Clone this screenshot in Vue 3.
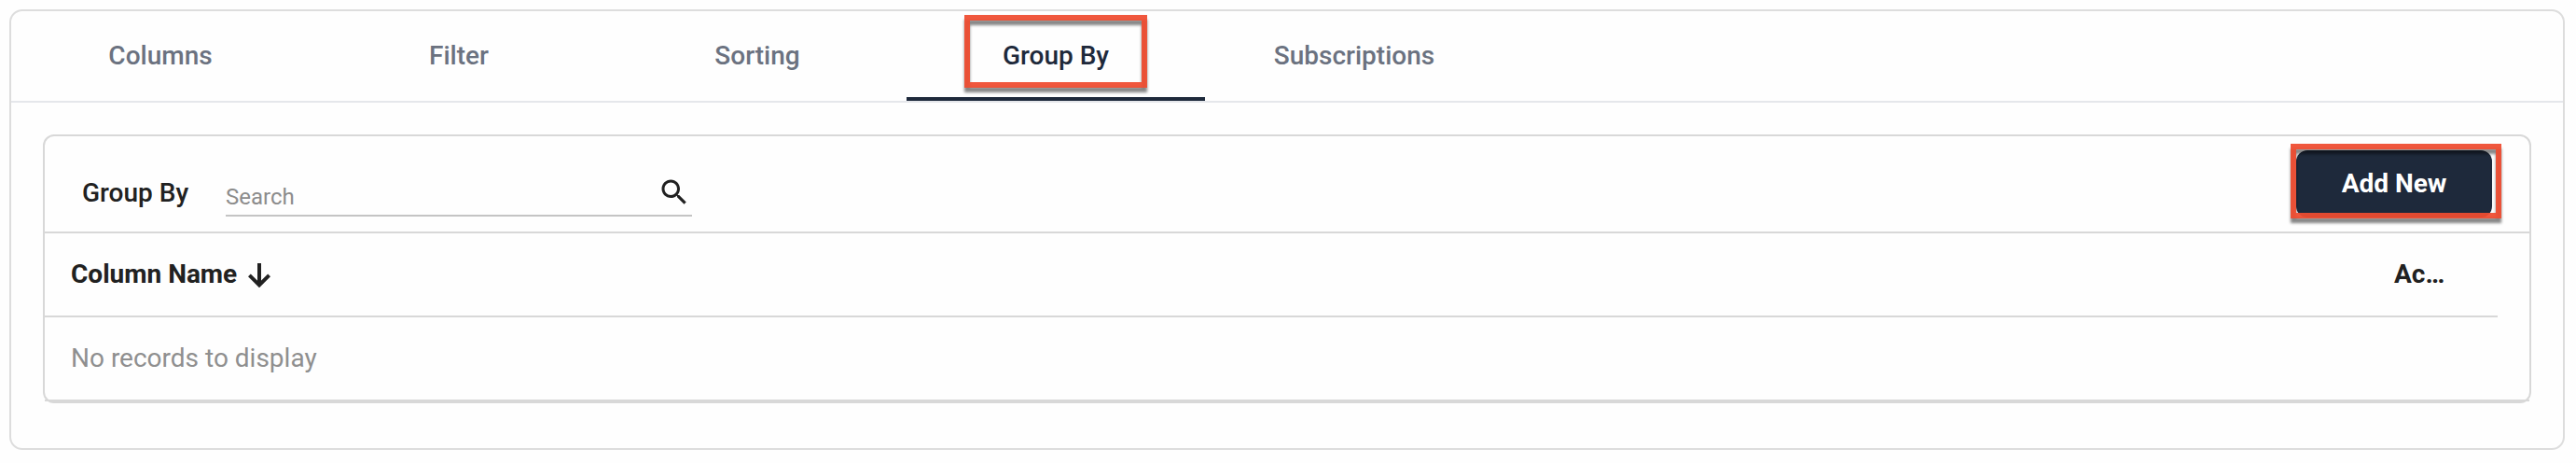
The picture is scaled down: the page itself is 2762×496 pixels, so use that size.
<template>
  <div class="grid-settings">
    <!-- Tabs -->
    <nav class="tabs">
      <button
        v-for="tab in tabs"
        :key="tab"
        class="tab"
        :class="{ active: tab === activeTab }"
        @click="activeTab = tab"
      >
        {{ tab }}
        <span v-if="tab === 'Group By'" class="highlight highlight-tab"></span>
      </button>
    </nav>

    <div class="tab-content">
      <div class="table-card">
        <!-- Toolbar -->
        <div class="toolbar">
          <h2 class="title">Group By</h2>
          <div class="search">
            <input v-model="search" type="text" placeholder="Search" />
            <svg class="icon-search" viewBox="0 0 24 24">
              <path d="M15.5 14h-.79l-.28-.27C15.41 12.59 16 11.11 16 9.5 16 5.91 13.09 3 9.5 3S3 5.91 3 9.5 5.91 16 9.5 16c1.61 0 3.09-.59 4.23-1.57l.27.28v.79l5 4.99L20.49 19l-4.99-5zm-6 0C7.01 14 5 11.99 5 9.5S7.01 5 9.5 5 14 7.01 14 9.5 11.99 14 9.5 14z" />
            </svg>
          </div>
          <div class="add">
            <button class="btn-add">Add New</button>
            <span class="highlight highlight-add"></span>
          </div>
        </div>

        <!-- Table -->
        <div class="row head">
          <div class="cell-name">
            Column Name
            <svg class="icon-sort" viewBox="0 0 24 26">
              <path d="M12 0v23M1.4 12.8L12 23.4l10.6-10.6" />
            </svg>
          </div>
          <div class="cell-action">Ac…</div>
        </div>
        <div class="row empty">No records to display</div>
      </div>
    </div>
  </div>
</template>

<script setup>
import { ref } from 'vue';

const tabs = ['Columns', 'Filter', 'Sorting', 'Group By', 'Subscriptions'];
const activeTab = ref('Group By');
const search = ref('');
</script>

<style>
body {
  display: flow-root;
  background: #fefefe;
}
</style>

<style scoped>
.grid-settings {
  box-sizing: border-box;
  width: 2740px;
  height: 472px;
  margin: 10px 10px 14px;
  border: 2px solid #dddddd;
  border-radius: 14px;
  font-family: Roboto, Arial, sans-serif;
  font-size: 28px;
  color: #212121;
}

button {
  border: none;
  background: none;
  font-family: inherit;
  cursor: pointer;
}

/* Tabs */
.tabs {
  display: flex;
  height: 96px;
  border-bottom: 2px solid #e5e7eb;
}

.tab {
  position: relative;
  box-sizing: border-box;
  width: 320px;
  padding: 2px 0 0;
  border-bottom: 4px solid transparent;
  font-size: 28px;
  font-weight: 500;
  color: #6b7280;
}

.tab.active {
  color: #1e293b;
  border-bottom-color: #1e293b;
}

.tab-content {
  padding: 34px;
}

/* Card */
.table-card {
  box-sizing: border-box;
  height: 288px;
  border: 2px solid #d8d8d8;
  border-radius: 12px;
}

.toolbar {
  display: flex;
  box-sizing: border-box;
  height: 104px;
  padding: 0 40px;
  border-bottom: 2px solid #d8d8d8;
}

.title {
  width: 154px;
  margin: 44px 0 0;
  font-size: 28px;
  font-weight: 500;
  line-height: 33px;
}

.search {
  display: flex;
  box-sizing: border-box;
  width: 500px;
  height: 50px;
  margin-top: 36px;
  border-bottom: 2px solid #c4c4c4;
}

.search input {
  flex: 1;
  min-width: 0;
  padding: 10px 0 0;
  border: none;
  outline: none;
  background: none;
  font-family: inherit;
  font-size: 24px;
}

.search input::placeholder {
  color: #8c8c8c;
  opacity: 1;
}

.icon-search {
  width: 36px;
  height: 36px;
  margin: 6px 1px 0 0;
  fill: #212121;
}

.add {
  position: relative;
  height: 72px;
  margin: 15px 0 0 auto;
}

.btn-add {
  display: block;
  width: 210px;
  height: 72px;
  padding: 0 0 2px;
  border-radius: 12px;
  background: #1e293b;
  color: #ffffff;
  font-size: 28px;
  font-weight: 700;
}

/* Rows */
.row {
  display: flex;
  align-items: center;
  box-sizing: border-box;
  height: 90px;
  padding: 0 0 2px 28px;
  border-bottom: 2px solid #d8d8d8;
}

.row.head {
  justify-content: space-between;
  margin-right: 34px;
  font-weight: 700;
}

.cell-name {
  display: flex;
  align-items: center;
}

.icon-sort {
  width: 24px;
  height: 26px;
  margin: 4px 0 0 12px;
  fill: none;
  stroke: #212121;
  stroke-width: 4;
}

.cell-action {
  width: 111px;
}

.row.empty {
  color: #8f8f8f;
}

/* Callout frames */
.highlight {
  position: absolute;
  box-sizing: border-box;
  border: 6px solid rgba(239, 76, 49, 0.94);
  filter: drop-shadow(0 5px 1.5px rgba(0, 0, 0, 0.5));
  pointer-events: none;
}

.highlight-tab {
  top: 4px;
  left: 62px;
  width: 196px;
  height: 78px;
}

.highlight-add {
  top: -7px;
  left: -6px;
  width: 226px;
  height: 80px;
}
</style>
